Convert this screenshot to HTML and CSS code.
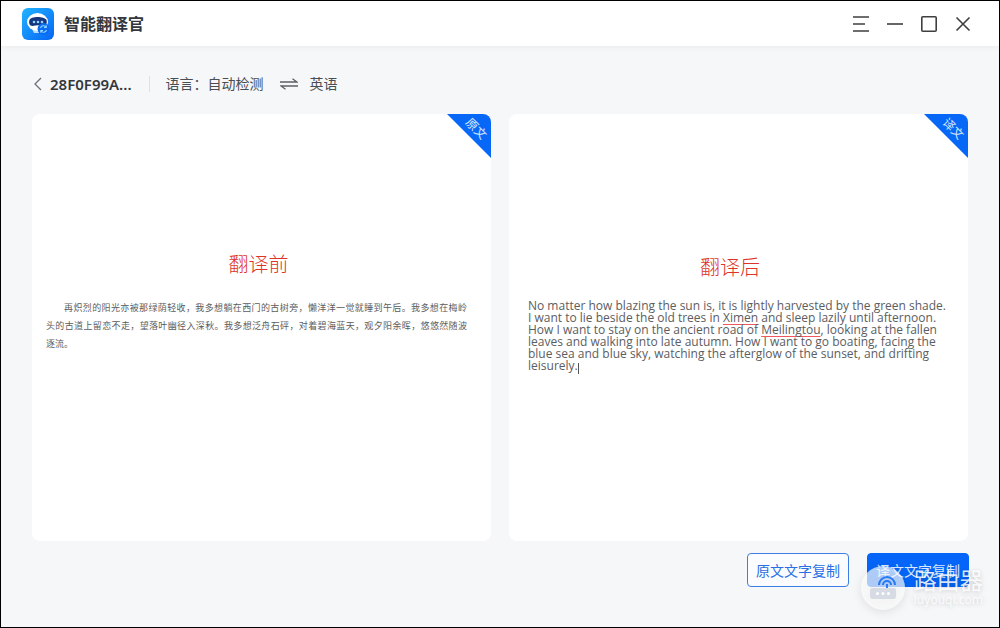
FILE: index.html
```
<!DOCTYPE html>
<html lang="zh-CN">
<head>
<meta charset="utf-8">
<title>智能翻译官</title>
<link rel="stylesheet" href="styles.css">
</head>
<body>
<div class="window">
  <header class="titlebar">
    <svg class="logo" viewBox="0 0 32 32" aria-hidden="true">
      <defs>
        <linearGradient id="logo-bg" x1="0" y1="0" x2="1" y2="1">
          <stop offset="0" stop-color="#20b4ff"/>
          <stop offset="1" stop-color="#0764f5"/>
        </linearGradient>
      </defs>
      <rect width="32" height="32" rx="6" fill="url(#logo-bg)"/>
      <path d="M10 21h11l-1 4h-8z" fill="#b9dcfb"/>
      <ellipse cx="15.500" cy="14" rx="10.500" ry="9" fill="#fff"/>
      <path d="M7.500 12c1-4 15-4 17 0 1 4-1 6-3 6-4-1-7-1-11 0-3 0-4-3-3-6z" fill="#15367f"/>
      <circle cx="12" cy="14" r="1.300" fill="#8fd3ff"/>
      <circle cx="16" cy="14" r="1.300" fill="#8fd3ff"/>
      <circle cx="20" cy="14" r="1.300" fill="#8fd3ff"/>
      <circle cx="21.500" cy="21" r="6" fill="#0a6cf0"/>
      <path d="M18.500 20a3 3 0 0 1 5.500-.8M24.500 22a3 3 0 0 1-5.500.8M24.200 17.300v2.200h-2.200M18.800 24.700v-2.200H21" fill="none" stroke="#8fd8ff" stroke-width="1.100"/>
    </svg>
    <h1 class="app-name">智能翻译官</h1>
    <div class="window-controls">
      <button class="control" type="button" aria-label="菜单"><svg viewBox="0 0 18 18"><path d="M1 2h16M1 9h12M1 16h16"/></svg></button>
      <button class="control" type="button" aria-label="最小化"><svg viewBox="0 0 18 18"><path d="M1 9h16"/></svg></button>
      <button class="control" type="button" aria-label="最大化"><svg viewBox="0 0 18 18"><rect x="1.800" y="1.800" width="14.400" height="14.400" rx="1"/></svg></button>
      <button class="control" type="button" aria-label="关闭"><svg viewBox="0 0 18 18"><path d="M2.500 2.500l13 13M15.500 2.500l-13 13"/></svg></button>
    </div>
  </header>

  <main class="content">
    <div class="toolbar">
      <button class="back" type="button">
        <svg class="back-icon" viewBox="0 0 8 14" aria-hidden="true"><path d="M7 1L1 7l6 6"/></svg>
        <span>28F0F99A...</span>
      </button>
      <div class="language">
        <span>语言：自动检测</span>
        <svg class="swap" viewBox="0 0 18 12" aria-hidden="true"><path d="M0 4h17L12.500.7M18 8H1l4.500 3.300"/></svg>
        <span>英语</span>
      </div>
    </div>

    <div class="panels">
      <section class="panel panel-source">
        <div class="ribbon"><span class="ribbon-text">原文</span></div>
        <h2 class="panel-title">翻译前</h2>
        <p class="source-text">
          <span class="line line-first">再炽烈的阳光亦被那绿荫轻收，我多想躺在西门的古树旁，懒洋洋一觉就睡到午后。我多想在梅岭</span>
          <span class="line">头的古道上留恋不走，望落叶幽径入深秋。我多想泛舟石砰，对着碧海蓝天，观夕阳余晖，悠悠然随波</span>
          <span class="line line-last">逐流。</span>
        </p>
      </section>
      <section class="panel panel-target">
        <div class="ribbon"><span class="ribbon-text">译文</span></div>
        <h2 class="panel-title">翻译后</h2>
        <p class="target-text">No matter how blazing the sun is, it is lightly harvested by the green shade.<br>I want to lie beside the old trees in <span class="misspelt">Ximen</span> and sleep lazily until afternoon.<br>How I want to stay on the ancient road of <span class="misspelt">Meilingtou</span>, looking at the fallen<br>leaves and walking into late autumn. How I want to go boating, facing the<br>blue sea and blue sky, watching the afterglow of the sunset, and drifting<br>leisurely.<span class="caret"></span></p>
      </section>
    </div>

    <div class="actions">
      <button class="button" type="button">原文文字复制</button>
      <button class="button button-primary" type="button">译文文字复制</button>
    </div>
  </main>

  <div class="watermark">
    <svg class="watermark-icon" viewBox="0 0 44 44" aria-hidden="true">
      <path fill-rule="evenodd" fill="#fff" fill-opacity=".68" d="M22 0a22 22 0 1 1 0 44a22 22 0 1 1 0-44zM12 22q-3 0-3 3v5q0 3 3 3h20q3 0 3-3v-5q0-3-3-3z"/>
      <path fill="none" stroke="#0565f0" stroke-width="2" stroke-opacity=".8" d="M18 19a8 8 0 1 1 16 0M22 19a4 4 0 1 1 8 0M26 18v4"/>
      <rect x="9" y="22" width="26" height="11" rx="3" fill="#d4dae3" fill-opacity=".8"/>
      <circle cx="16.500" cy="27.500" r="1.500" fill="#fff"/>
      <circle cx="22" cy="27.500" r="1.500" fill="#fff"/>
      <circle cx="27.500" cy="27.500" r="1.500" fill="#fff"/>
    </svg>
    <div class="watermark-text">
      <span class="watermark-name">路由器</span>
      <span class="watermark-site">luyouqi.com</span>
    </div>
  </div>
</div>
</body>
</html>
```
FILE: styles.css
```
* {
  box-sizing: border-box;
}

body {
  margin: 0;
  font-family: "Noto Sans", "Noto Sans CJK SC", sans-serif;
  font-size: 14px;
  color: #4a4e54;
}

button {
  margin: 0;
  padding: 0;
  border: 0;
  background: none;
  font: inherit;
  color: inherit;
  cursor: pointer;
}

.window {
  position: relative;
  display: flex;
  flex-direction: column;
  min-height: 100vh;
  border: 1px solid #000;
  background: #f6f7f9;
}

.titlebar {
  display: flex;
  align-items: center;
  height: 45px;
  padding: 0 27px 0 21px;
  background: #fff;
  box-shadow: 0 1px 6px rgba(0, 0, 0, 0.06);
}

.logo {
  width: 32px;
  height: 32px;
}

.app-name {
  margin: 0 0 0 10px;
  font-size: 16px;
  line-height: 24px;
  font-weight: 700;
  color: #33373d;
}

.window-controls {
  display: flex;
  gap: 16px;
  margin-left: auto;
}

.control {
  display: flex;
  width: 18px;
  height: 18px;
}

.control svg {
  width: 18px;
  height: 18px;
  fill: none;
  stroke: #3f3f42;
  stroke-width: 1.6;
}

.content {
  display: flex;
  flex: 1;
  flex-direction: column;
  padding: 0 30px 40px 31px;
}

.toolbar {
  display: flex;
  align-items: center;
  height: 68px;
  padding: 8px 0 0 2px;
  line-height: 20px;
}

.back {
  display: flex;
  align-items: center;
  gap: 8px;
  font-size: 15px;
  line-height: 20px;
  font-weight: 600;
  color: #33373d;
}

.back-icon {
  width: 8px;
  height: 14px;
  fill: none;
  stroke: #6d7177;
  stroke-width: 1.3;
}

.language {
  display: flex;
  align-items: center;
  margin-left: 17px;
  padding-left: 17px;
  background: linear-gradient(#dfe1e5, #dfe1e5) left center / 1px 16px no-repeat;
}

.swap {
  width: 18px;
  height: 12px;
  margin: 0 12px 0 16px;
  fill: none;
  stroke: #5c6066;
  stroke-width: 1.3;
}

.panels {
  display: grid;
  flex: 1;
  grid-template-columns: 1fr 1fr;
  gap: 18px;
  padding-right: 1px;
}

.panel {
  position: relative;
  overflow: hidden;
  border-radius: 8px;
  background: #fff;
}

.panel-source {
  padding: 138px 24px 24px 14px;
}

.panel-target {
  padding: 141px 14px 24px 19px;
}

.ribbon {
  position: absolute;
  top: 0;
  right: 0;
  width: 44px;
  height: 44px;
  background: #0768f8;
  clip-path: polygon(0 0, 100% 0, 100% 100%);
}

.ribbon-text {
  position: absolute;
  top: 6px;
  right: 2px;
  width: 26px;
  font-size: 12px;
  line-height: 18px;
  text-align: center;
  color: #d9e9ff;
  transform: rotate(45deg);
}

.panel-title {
  margin: 0;
  font-family: "Noto Sans CJK SC", sans-serif;
  font-size: 20px;
  line-height: 24px;
  font-weight: 300;
  text-align: center;
  color: #de3427;
}

.panel-source .panel-title {
  padding-left: 4px;
}

.panel-target .panel-title {
  padding-right: 22px;
}

.source-text {
  margin: 23px 0 0;
  font-size: 9px;
  line-height: 18px;
  color: #5c5c5c;
}

.line {
  display: block;
  text-align-last: justify;
}

.line-first {
  padding-left: 2em;
}

.line-last {
  text-align-last: left;
}

.target-text {
  margin: 21px 0 0;
  font-family: "Open Sans", sans-serif;
  font-size: 12px;
  line-height: 12px;
  color: #5b5d61;
}

.misspelt {
  text-decoration: underline 1px #f0565e;
  text-decoration-skip-ink: none;
  text-underline-offset: 2px;
}

.caret {
  display: inline-block;
  height: 11px;
  border-right: 1px solid #555;
  vertical-align: text-bottom;
}

.actions {
  display: flex;
  justify-content: flex-end;
  gap: 18px;
  margin-top: 12px;
}

.button {
  width: 102px;
  height: 34px;
  border: 1px solid #3f7de6;
  border-radius: 4px;
  background: #fafcff;
  color: #2b6fe3;
}

.button-primary {
  border-color: #0565f8;
  background: #0565f8;
  color: #d9e9ff;
}

.watermark {
  position: absolute;
  right: 16px;
  bottom: 17px;
  display: flex;
  align-items: center;
  gap: 9px;
  pointer-events: none;
}

.watermark-icon {
  width: 44px;
  height: 44px;
  filter: drop-shadow(0 2px 5px rgba(0, 0, 0, 0.14));
}

.watermark-text {
  display: flex;
  flex-direction: column;
  color: rgba(255, 255, 255, 0.85);
  text-shadow: 0 1px 5px rgba(0, 0, 0, 0.2);
}

.watermark-name {
  font-size: 23px;
  line-height: 24px;
}

.watermark-site {
  font-size: 12px;
  line-height: 16px;
}
```
